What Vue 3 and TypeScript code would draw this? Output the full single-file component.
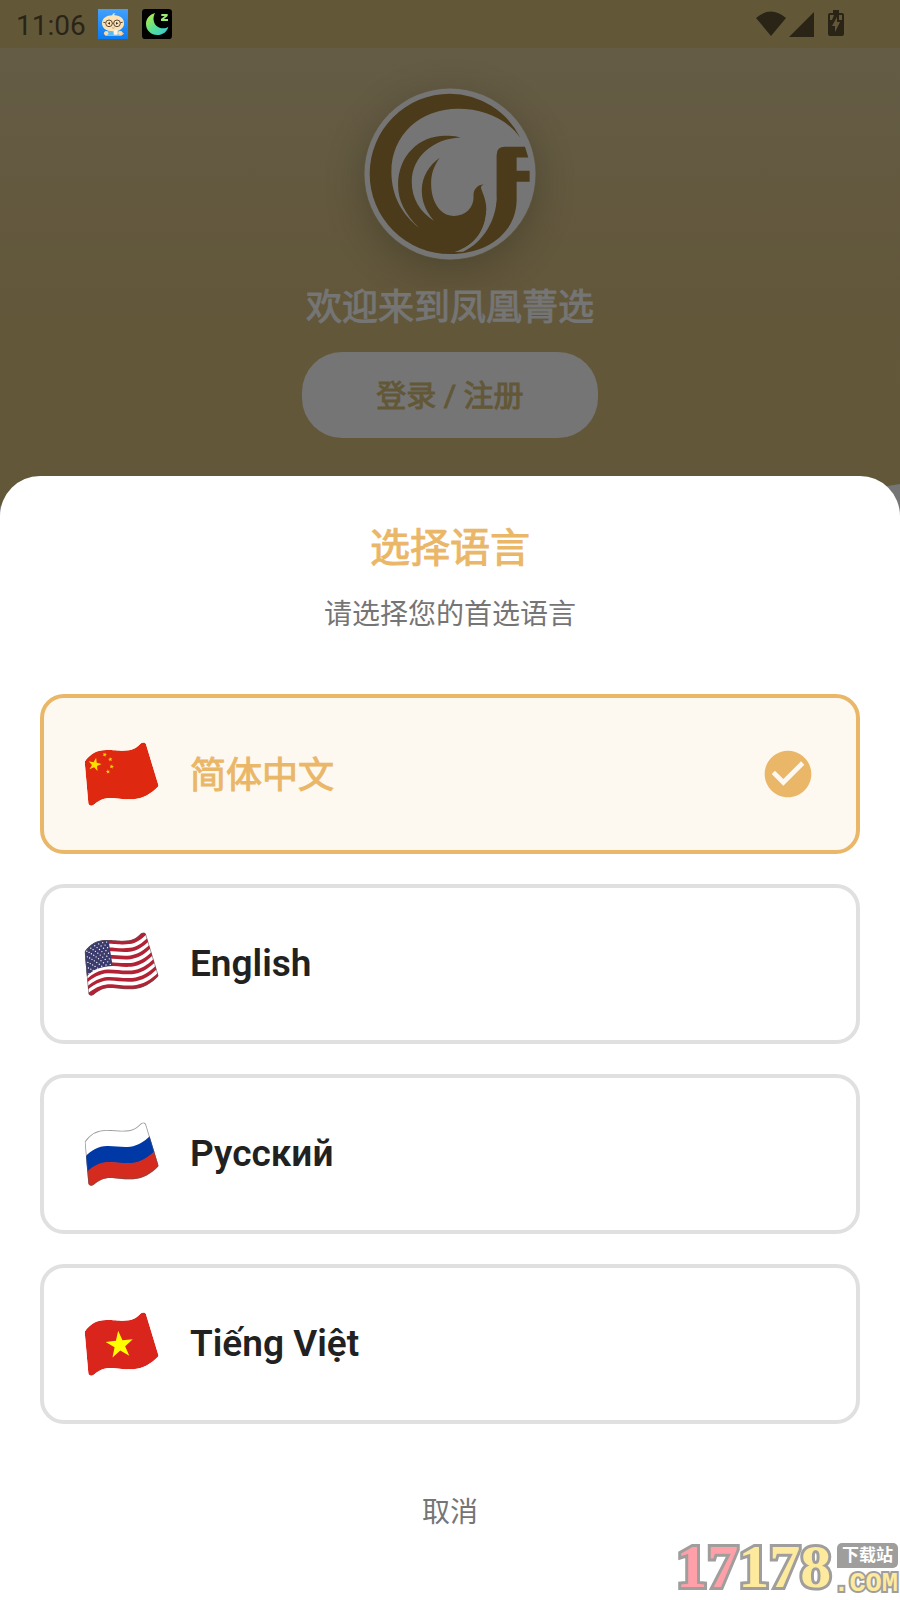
<script setup lang="ts">
import { ref } from 'vue'

type Point = [number, number]
type Code = 'zh' | 'en' | 'ru' | 'vi'

interface Language {
  code: Code
  label: string
  lang: string
  outlined: boolean
}

const languages: Language[] = [
  { code: 'zh', label: '简体中文', lang: 'zh-CN', outlined: false },
  { code: 'en', label: 'English', lang: 'en', outlined: true },
  { code: 'ru', label: 'Русский', lang: 'ru', outlined: true },
  { code: 'vi', label: 'Tiếng Việt', lang: 'vi', outlined: false },
]
const selected = ref<Code>('zh')

const cloth =
  'M5 62C22 38 42 27 70 27C100 27 112 31 138 28C158 25 166 14 174 7C180 3 187 4 189 10L227 135C205 158 182 172 150 175C118 176 100 170 75 171C55 173 42 184 31 192C25 196 17 194 16 187Z'

// Bezier control points of the cloth's upper and lower edges.
const upper: Point[] = [[3, 62], [22, 38], [42, 27], [70, 27], [100, 27], [112, 31], [138, 28], [158, 25], [172, 14], [187, 0]]
const lower: Point[] = [[15, 198], [31, 185], [55, 173], [75, 171], [100, 170], [118, 176], [150, 175], [182, 172], [205, 158], [229, 135]]

function edge(t: number): Point[] {
  return upper.map(([x, y], i) => [x + (lower[i][0] - x) * t, y + (lower[i][1] - y) * t])
}

function curve(points: Point[]): string {
  const p = points.map(([x, y]) => `${x.toFixed(1)} ${y.toFixed(1)}`)
  return `${p[0]}C${p.slice(1).join(' ')}`
}

function band(from: number, to: number): string {
  return `M${curve(edge(from))}L${curve(edge(to).reverse())}Z`
}

function star(cx: number, cy: number, r: number, turn: number): string {
  return Array.from({ length: 10 }, (_, i) => {
    const radius = i % 2 ? r * 0.39 : r
    const a = ((i * 36 - 90 + turn) * Math.PI) / 180
    return `${(cx + radius * Math.cos(a)).toFixed(1)},${(cy + radius * Math.sin(a)).toFixed(1)}`
  }).join(' ')
}

const whiteStripes = [1, 3, 5, 7, 9, 11].map((n) => band(n / 13, (n + 1) / 13))

const cantonStars: Point[] = []
for (let row = 0; row < 9; row++) {
  const count = row % 2 ? 5 : 6
  for (let col = 0; col < count; col++) {
    const u = (col + (row % 2 ? 1 : 0.5)) / 6
    const v = (row + 0.6) / 9.2
    const lift = (1 - u) * (1 - u) * 33
    cantonStars.push([5 + u * 71 + v * (7 + u * 6), 28 + lift + v * 77])
  }
}
</script>

<template>
  <div class="page">
    <header class="status">
      <div class="status-side">
        <time class="clock">11:06</time>
        <svg class="app" viewBox="0 0 90 90" aria-hidden="true">
          <defs>
            <linearGradient id="sky" x1="0" y1="0" x2="0" y2="1">
              <stop offset="0" stop-color="#43a0fb" />
              <stop offset="1" stop-color="#0a7cf3" />
            </linearGradient>
          </defs>
          <rect width="90" height="90" fill="url(#sky)" />
          <path d="M22 66h48l8 8-8 6H22l-5-7Z" fill="#f6c58e" />
          <path d="M29 60h35l2 19H27Z" fill="#5cb9ef" />
          <path d="M53 12C48 13 48 17 50 19C68 20 79 30 78 45C77 59 64 67 45 67C25 67 12 58 12 43C12 28 25 19 43 19C43 14 47 11 53 12Z" fill="#fbe3b5" />
          <g fill="none" stroke="#5d4934" stroke-width="3"><circle cx="33" cy="43" r="10" /><circle cx="57" cy="43" r="10" /><path d="M43 43h4M22 41l-6-1M67 41l7-1" /></g>
          <path d="M29 43l7-4v8ZM61 43l-7-4v8Z" fill="#3c2d22" />
          <path d="M42 56q4 3 8 0" fill="none" stroke="#c8814c" stroke-width="2" />
          <path d="M47 64l12-2v15H47Z" fill="#fff4e3" />
          <circle cx="25" cy="73" r="6" fill="#ffd9a7" /><circle cx="66" cy="72" r="6" fill="#ffd9a7" />
        </svg>
        <svg class="app" viewBox="0 0 90 90" aria-hidden="true">
          <defs>
            <linearGradient id="moon" x1="0" y1="0" x2="1" y2="1">
              <stop offset="0" stop-color="#c2ef3b" />
              <stop offset=".5" stop-color="#5adf91" />
              <stop offset="1" stop-color="#35c5e5" />
            </linearGradient>
          </defs>
          <rect width="90" height="90" rx="10" fill="#000" />
          <path d="M39 12C23 16 12 29 12 45C12 64 27 78 46 78C61 78 75 69 79 53C70 60 54 60 44 51C33 41 32 25 39 12Z" fill="url(#moon)" />
          <path d="M58 15h19v6L66 30h12v6H57v-6l11-9H58Z" fill="#9beb72" />
        </svg>
      </div>
      <svg class="signals" viewBox="0 0 90 28" aria-hidden="true">
        <path d="M0 8Q15-5 30 8L15 26Z" />
        <path d="M58 2v25H33Z" />
        <path d="M77 0h6v3h3q2 0 2 2v19q0 2-2 2H74q-2 0-2-2V5q0-2 2-2h3Z" />
        <path class="bolt" d="M74 5h4l-2 5h-2ZM83 5h3v5h-3ZM81 7l-5 9h3v6l5-10h-3Z" />
      </svg>
    </header>

    <section class="hero">
      <svg class="logo" viewBox="74 54 513 515" role="img" aria-label="凤凰菁选">
        <circle cx="330.500" cy="311.500" r="256" fill="#757575" />
        <path
          fill="#4b3b1b"
          d="M541 203C500 145 430 116 355 116C240 116 155 195 155 305C155 380 190 435 237 472C195 430 175 390 175 345C175 255 240 195 320 197Q345 196 362 202C280 205 216 260 216 335C216 385 240 425 283 452C255 420 246 390 246 360C246 320 268 285 300 263C280 290 274 315 274 340C274 400 305 437 342 437C378 437 402 410 401 380C399 358 412 344 432 342C421 346 422 354 427 364C436 385 440 405 439 420C437 480 405 525 345 545L370 544C430 515 470 450 470 380V255Q470 230 495 230H555L565 262H530V302H569V335H530V390C528 490 440 551 330 551A240 240 0 0 1 330 71A239 239 0 0 1 541 203Z"
        />
        <path d="M439 422C437 480 405 525 345 545L370 541C430 510 466 450 470 380Z" fill="#757575" />
      </svg>
      <h1 class="welcome heavy">欢迎来到凤凰菁选</h1>
      <button type="button" class="login heavy">登录 / 注册</button>
      <svg class="hero-curve" viewBox="0 0 900 40" preserveAspectRatio="none" aria-hidden="true">
        <path d="M0 30C300 46 700 44 900 8V40H0Z" fill="#757575" />
      </svg>
    </section>

    <main class="sheet" role="dialog" aria-labelledby="sheet-title">
      <h2 id="sheet-title" class="title heavy">选择语言</h2>
      <p class="subtitle">请选择您的首选语言</p>

      <div class="options" role="radiogroup" aria-labelledby="sheet-title">
        <label
          v-for="item in languages"
          :key="item.code"
          class="option"
          :class="{ active: selected === item.code }"
        >
          <input v-model="selected" class="radio" type="radio" name="language" :value="item.code" />
          <svg class="flag" viewBox="0 0 231 198" aria-hidden="true">
            <defs>
              <clipPath :id="`cloth-${item.code}`"><path :d="cloth" /></clipPath>
            </defs>
            <g :clip-path="`url(#cloth-${item.code})`">
              <template v-if="item.code === 'zh'">
                <path :d="cloth" fill="#de2910" />
                <g fill="#ffde00">
                  <polygon :points="star(35, 71, 21, 12)" />
                  <polygon :points="star(65, 41, 7, 20)" />
                  <polygon :points="star(82, 55, 7, -10)" />
                  <polygon :points="star(86, 77, 7, 10)" />
                  <polygon :points="star(75, 92, 7, -5)" />
                </g>
              </template>
              <template v-else-if="item.code === 'en'">
                <path :d="cloth" fill="#b22234" />
                <path v-for="d in whiteStripes" :key="d" :d="d" fill="#fff" />
                <path d="M0 62C22 38 42 27 76 25L89 105C60 106 30 113 11 137Z" fill="#3c3b6e" />
                <circle v-for="([x, y], i) in cantonStars" :key="i" :cx="x" :cy="y" r="2" fill="#fff" />
              </template>
              <template v-else-if="item.code === 'ru'">
                <path :d="cloth" fill="#fff" />
                <path :d="band(0.333, 0.68)" fill="#0039a6" />
                <path :d="band(0.667, 1.1)" fill="#d52b1e" />
              </template>
              <template v-else>
                <path :d="cloth" fill="#da251d" />
                <polygon :points="star(110, 102, 43, -6)" fill="#ff0" />
              </template>
              <path v-if="item.outlined" :d="cloth" class="outline" />
            </g>
          </svg>
          <span class="name" :class="{ heavy: item.code === 'zh' }" :lang="item.lang">{{ item.label }}</span>
          <svg v-if="selected === item.code" class="check" viewBox="0 0 24 24" aria-hidden="true">
            <path d="M12 2C6.480 2 2 6.480 2 12s4.480 10 10 10 10-4.480 10-10S17.520 2 12 2zm-2 15l-5-5 1.410-1.410L10 14.170l7.590-7.590L19 8l-9 9z" />
          </svg>
        </label>
      </div>

      <button type="button" class="cancel">取消</button>
    </main>

    <aside class="watermark" aria-label="17178.com 下载站">
      <span class="digits"><span class="pink">17</span>178</span>
      <span class="site">
        <span class="tag">下载站</span>
        <span class="com">.COM</span>
      </span>
    </aside>
  </div>
</template>

<style>
body {
  margin: 0;
  background: #fff;
}
</style>

<style scoped>
.page {
  position: relative;
  display: flex;
  flex-direction: column;
  min-height: 100vh;
  overflow: hidden;
  background: #757575;
  font-family: Roboto, "Noto Sans CJK SC", sans-serif;
}

.status {
  display: flex;
  justify-content: space-between;
  align-items: center;
  box-sizing: border-box;
  height: 48px;
  padding: 0 54px 0 16px;
  background: #625838;
  color: #2a2417;
}

.status-side {
  display: flex;
  align-items: center;
  gap: 14px;
}

.clock {
  width: 68px;
  padding-top: 3px;
  font-size: 28px;
  font-weight: 400;
  line-height: 45px;
  white-space: nowrap;
}

.app {
  width: 30px;
  height: 30px;
}

.signals {
  width: 90px;
  height: 28px;
  fill: #2a2417;
}

.signals .bolt {
  fill: #625838;
}

.hero {
  position: relative;
  display: flex;
  flex-direction: column;
  align-items: center;
  padding: 40px 24px 78px;
  background: linear-gradient(#655c46, #62573a 55%, #625838);
}

.logo {
  width: 172px;
  height: 172px;
  border-radius: 50%;
  box-shadow: 0 10px 40px rgba(0, 0, 0, 0.22);
}

.welcome {
  margin: 22px 0 0;
  color: #757575;
  font-size: 36px;
  line-height: 52px;
}

.login {
  margin-top: 18px;
  height: 86px;
  padding: 0 74px 4px;
  border: 0;
  border-radius: 40px;
  background: #757575;
  color: #625838;
  font: inherit;
  font-size: 30px;
}

.hero-curve {
  position: absolute;
  left: 0;
  bottom: 0;
  width: 100%;
  height: 40px;
}

.sheet {
  position: relative;
  display: flex;
  flex: 1;
  flex-direction: column;
  margin-top: -40px;
  padding: 45px 40px 48px;
  border-radius: 40px 40px 0 0;
  background: #fff;
  text-align: center;
}

.title {
  margin: 0;
  color: #eab768;
  font-size: 40px;
  line-height: 56px;
}

.subtitle {
  margin: 16px 0 0;
  color: #757575;
  font-size: 28px;
  line-height: 44px;
}

.options {
  display: grid;
  gap: 30px;
  margin-top: 57px;
}

.option {
  position: relative;
  display: flex;
  align-items: center;
  gap: 30px;
  box-sizing: border-box;
  min-height: 160px;
  padding: 0 40px;
  border: 4px solid #e0e0e0;
  border-radius: 24px;
  color: #212121;
  font-size: 37px;
  font-weight: 600;
  line-height: 44px;
  text-align: left;
  cursor: pointer;
}

.option.active {
  border-color: #eab768;
  background: #fdf8f0;
  color: #eab768;
}

.name:lang(zh) {
  padding-top: 4px;
  font-size: 36px;
}

/* Thickens the regular Chinese face to a weight between regular and bold. */
.heavy {
  font-weight: 400;
  -webkit-text-stroke: 1px currentColor;
}

.radio {
  position: absolute;
  inset: 0;
  margin: 0;
  appearance: none;
  cursor: pointer;
}

.flag {
  width: 77px;
  height: 66px;
  margin-left: -1px;
}

.outline {
  fill: none;
  stroke: #5a5a5a;
  stroke-opacity: 0.6;
  stroke-width: 5;
}

.name {
  flex: 1;
}

.check {
  width: 56px;
  height: 56px;
  fill: #eab768;
}

.cancel {
  align-self: center;
  height: 80px;
  margin-top: 46px;
  padding: 0 40px;
  border: 0;
  background: none;
  color: #757575;
  font: inherit;
  font-size: 28px;
}

.watermark {
  position: absolute;
  right: 0;
  bottom: 0;
  display: flex;
  align-items: flex-end;
  padding-right: 2px;
  color: #fdea9c;
  font-weight: 700;
  pointer-events: none;
}

.digits {
  font-family: "Liberation Serif", serif;
  font-size: 62px;
  line-height: 68px;
  padding: 0 2px 0 4px;
  -webkit-text-stroke: 6px #9f9e9d;
  paint-order: stroke fill;
}

.pink {
  color: #ffa0a8;
}

.site {
  display: flex;
  flex-direction: column;
  align-items: flex-end;
}

.tag {
  padding: 0 5px;
  border-radius: 5px 5px 5px 0;
  background: #9f9e9d;
  color: #fff;
  font-size: 17px;
  line-height: 25px;
}

.com {
  font-family: "Liberation Mono", monospace;
  font-size: 27px;
  line-height: 32px;
  -webkit-text-stroke: 4px #9f9e9d;
  paint-order: stroke fill;
}
</style>
